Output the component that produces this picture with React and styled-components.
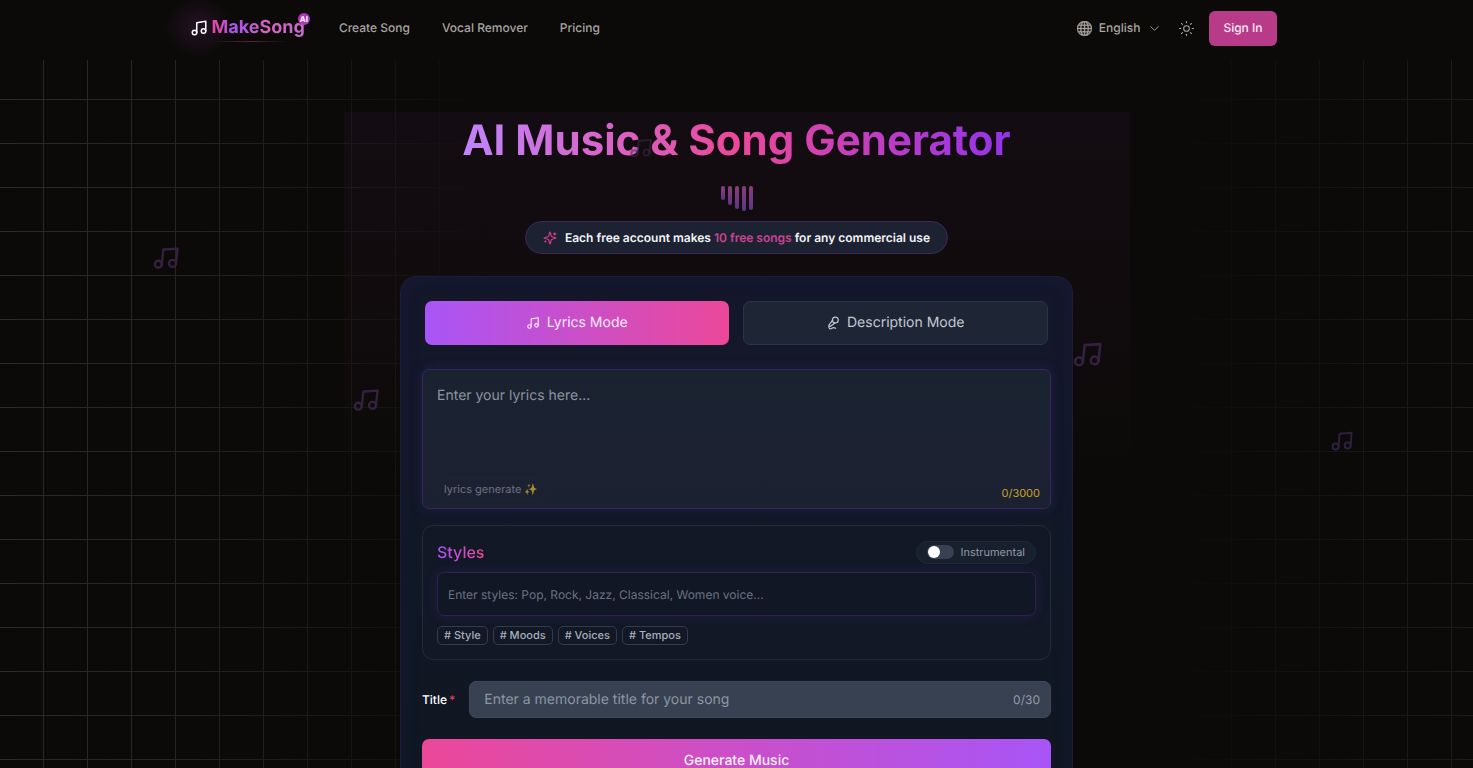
import React, { useState } from "react";
import styled, { createGlobalStyle } from "styled-components";
import { ChevronDown, MicVocal, Music, Sun } from "lucide-react";
import { BsGlobe } from "react-icons/bs";

const GlobalStyle = createGlobalStyle`
  *, *::before, *::after {
    box-sizing: border-box;
  }
  body {
    margin: 0;
    background: #0c0a09;
    color: #f3f4f6;
    font-family: Inter, "Liberation Sans", sans-serif;
    font-size: 12px;
    line-height: 20px;
    text-rendering: geometricPrecision;
  }
  button, input, textarea {
    font: inherit;
    color: inherit;
    text-rendering: inherit;
  }
`;

const Page = styled.div`
  position: relative;
  overflow: hidden;
`;

const GridBackdrop = styled.div`
  position: absolute;
  inset: 60px 0 0;
  background-image: linear-gradient(to right, #2b2a29 1px, transparent 1px),
    linear-gradient(to bottom, #2b2a29 1px, transparent 1px);
  background-size: 44px 44px;
  background-position: 43px 39px;
  mask-image: linear-gradient(
    to right,
    #000 0%,
    rgba(0, 0, 0, 0.85) 12%,
    rgba(0, 0, 0, 0.35) 25%,
    transparent 33%,
    transparent 79%,
    rgba(0, 0, 0, 0.6) 100%
  );
`;

const FloatingNote = styled(Music)`
  position: absolute;
  left: ${({ $left }) => $left};
  top: ${({ $top }) => $top}px;
  color: ${({ $color }) => $color || "#34213f"};
  transform: rotate(${({ $turn }) => $turn || 6}deg);
  pointer-events: none;
`;

const Header = styled.header`
  position: relative;
  height: 60px;
  background: #0c0a09;
`;

const HeaderInner = styled.div`
  max-width: 1092px;
  height: 56px;
  margin: 0 auto;
  padding-right: 6px;
  display: flex;
  align-items: center;
`;

const Logo = styled.a`
  position: relative;
  display: flex;
  align-items: center;
  gap: 4px;
  margin-left: -1px;
  color: #fff;
  text-decoration: none;
  &::before {
    content: "";
    position: absolute;
    left: -24px;
    top: -16px;
    width: 66px;
    height: 58px;
    background: radial-gradient(closest-side, rgba(168, 60, 190, 0.16), transparent);
  }
  &::after {
    content: "";
    position: absolute;
    left: 22px;
    bottom: 0;
    width: 76px;
    height: 1px;
    background: linear-gradient(to right, transparent, #5b2140, transparent);
  }
  svg {
    position: relative;
  }
`;

const LogoText = styled.span`
  font-size: 18px;
  line-height: 28px;
  font-weight: 700;
  background: linear-gradient(to right, #ec4899, #a855f7 25%, #d565b8 60%, #c26bd0);
  background-clip: text;
  color: transparent;
`;

const LogoBadge = styled.span`
  position: absolute;
  right: -5px;
  top: -1px;
  width: 12px;
  height: 12px;
  border-radius: 50%;
  background: linear-gradient(to right, #c034a5, #9b3bd0);
  color: #fff;
  font-size: 8px;
  font-weight: 700;
  line-height: 12px;
  text-align: center;
`;

const Nav = styled.nav`
  display: flex;
  gap: 32px;
  margin-left: 34px;
  a {
    color: #a8a5a2;
    text-decoration: none;
    font-weight: 500;
  }
`;

const HeaderActions = styled.div`
  display: flex;
  align-items: center;
  margin-left: auto;
`;

const LanguageButton = styled.button`
  display: flex;
  align-items: center;
  gap: 7px;
  padding: 0;
  border: 0;
  background: none;
  color: #a8a5a2;
  font-weight: 500;
`;

const ThemeButton = styled.button`
  display: flex;
  margin: 0 14px 0 16px;
  padding: 0;
  border: 0;
  background: none;
  color: #a8a5a2;
`;

const SignInButton = styled.button`
  height: 35px;
  padding: 0 14px;
  border: 0;
  border-radius: 6px;
  background: #b73b89;
  color: #fbeaf4;
  font-weight: 500;
`;

const Hero = styled.main`
  position: relative;
  display: flex;
  flex-direction: column;
  align-items: center;
  padding: 52px 20px 40px;
`;

const HeroGlow = styled.div`
  position: absolute;
  top: 52px;
  left: 50%;
  width: 786px;
  max-width: 100%;
  height: 370px;
  transform: translateX(-50%);
  background: linear-gradient(
    to bottom,
    rgba(110, 50, 150, 0.07),
    rgba(130, 40, 110, 0.04) 50%,
    transparent
  );
`;

const Title = styled.h1`
  position: relative;
  margin: 0;
  font-size: 42px;
  line-height: 58px;
  font-weight: 700;
  background: linear-gradient(to right, #c084fc, #ec4899 50%, #9333ea);
  background-clip: text;
  color: transparent;
`;

const Bars = styled.div`
  position: relative;
  display: flex;
  gap: 3px;
  height: 25px;
  margin: 16px 0 10px;
`;

const Bar = styled.span`
  width: 4px;
  height: ${({ $height }) => $height}px;
  border-radius: 2px;
  background: linear-gradient(to bottom, #893f78, #5d3585);
`;

const Notice = styled.p`
  position: relative;
  display: flex;
  align-items: center;
  gap: 8px;
  height: 33px;
  margin: 0 0 22px;
  padding: 0 17px;
  border: 1px solid #3b2a5a;
  border-radius: 17px;
  background: #1d2232;
  font-weight: 600;
  svg {
    color: #cb3f86;
  }
  strong {
    color: #cb4390;
    font-weight: 600;
  }
`;

const Card = styled.form`
  position: relative;
  width: 100%;
  max-width: 673px;
  padding: 24px 21px;
  border: 1px solid #1d1c38;
  border-radius: 16px;
  background: linear-gradient(to bottom, #14172a, #111826 50%, #101722);
  box-shadow: inset 0 0 20px rgba(45, 40, 130, 0.12);
`;

const ModeTabs = styled.div`
  display: flex;
  gap: 14px;
  margin: 0 3px 24px;
`;

const ModeButton = styled.button`
  flex: 1;
  display: flex;
  align-items: center;
  justify-content: center;
  gap: 7px;
  height: 44px;
  padding: 0;
  border: ${({ $active }) => ($active ? "0" : "1px solid #2a3443")};
  border-radius: 7px;
  background: ${({ $active }) =>
    $active ? "linear-gradient(to right, #a855f7, #ec4899)" : "#1e2535"};
  color: ${({ $active }) => ($active ? "#fbeaff" : "#c3c9d4")};
  font-size: 14px;
`;

const LyricsBox = styled.div`
  position: relative;
  height: 140px;
  margin-bottom: 16px;
  border: 1px solid #3a2460;
  border-radius: 7px;
  background: linear-gradient(to bottom, #1a2230, #1c2131);
  box-shadow: 0 0 14px rgba(110, 60, 220, 0.16);
`;

const LyricsInput = styled.textarea`
  display: block;
  width: 100%;
  height: 100%;
  padding: 14px;
  border: 0;
  outline: 0;
  resize: none;
  background: none;
  font-size: 14px;
  line-height: 23px;
  &::placeholder {
    color: #8d93a0;
    opacity: 1;
  }
`;

const GenerateLyrics = styled.button`
  position: absolute;
  left: 13px;
  bottom: 8px;
  height: 23px;
  padding: 0 11px 0 7px;
  border: 1px solid #1f2332;
  border-radius: 12px;
  background: none;
  color: #6b7180;
  font-size: 11px;
  span {
    opacity: 0.6;
  }
`;

const LyricsCount = styled.span`
  position: absolute;
  right: 10px;
  bottom: 5px;
  color: #caa62b;
  font-size: 11px;
`;

const StylesPanel = styled.section`
  margin-bottom: 21px;
  padding: 14px;
  border: 1px solid #222a39;
  border-radius: 11px;
  background: #121826;
`;

const StylesHead = styled.div`
  display: flex;
  align-items: center;
  justify-content: space-between;
  height: 24px;
  margin-bottom: 8px;
`;

const StylesTitle = styled.h2`
  margin: 0;
  font-size: 16px;
  line-height: 24px;
  font-weight: 500;
  background: linear-gradient(to right, #a855f7, #ec4899);
  background-clip: text;
  color: transparent;
`;

const SwitchLabel = styled.label`
  display: flex;
  align-items: center;
  gap: 6px;
  height: 23px;
  padding: 0 10px;
  border: 1px solid #1f2a38;
  border-radius: 12px;
  background: #18202e;
  color: #9299a6;
  font-size: 11px;
`;

const Switch = styled.input`
  appearance: none;
  display: flex;
  align-items: center;
  width: 27px;
  height: 14px;
  margin: 0;
  padding: 1px;
  border-radius: 7px;
  background: #374151;
  &::before {
    content: "";
    width: 12px;
    height: 12px;
    border-radius: 50%;
    background: #fff;
  }
  &:checked::before {
    margin-left: auto;
  }
`;

const StylesInput = styled.input`
  display: block;
  width: 100%;
  height: 44px;
  padding: 0 10px;
  border: 1px solid #2f2050;
  border-radius: 7px;
  outline: 0;
  background: #111725;
  box-shadow: 0 0 14px rgba(110, 60, 220, 0.16);
  &::placeholder {
    color: #6b7280;
    opacity: 1;
  }
`;

const TagRow = styled.div`
  display: flex;
  gap: 5px;
  margin-top: 10px;
`;

const Tag = styled.button`
  height: 19px;
  padding: 0 6px;
  border: 1px solid #343c4a;
  border-radius: 5px;
  background: none;
  color: #a9b0bc;
  font-size: 11px;
  line-height: 17px;
  font-weight: 500;
`;

const TitleRow = styled.div`
  display: flex;
  align-items: center;
  gap: 14px;
  margin-bottom: 21px;
  label {
    color: #fff;
    font-weight: 500;
  }
  label span {
    margin-left: 2px;
    color: #d6404c;
  }
`;

const TitleField = styled.div`
  flex: 1;
  display: flex;
  align-items: center;
  height: 37px;
  padding: 0 10px 0 14px;
  border: 1px solid #3e4a58;
  border-radius: 7px;
  background: #374151;
  color: #9299a6;
`;

const TitleInput = styled.input`
  flex: 1;
  min-width: 0;
  padding: 0;
  border: 0;
  outline: 0;
  background: none;
  font-size: 14px;
  &::placeholder {
    color: #8d95a2;
    opacity: 1;
  }
`;

const SubmitButton = styled.button`
  display: block;
  width: 100%;
  height: 44px;
  border: 0;
  border-radius: 7px;
  background: linear-gradient(to right, #ec4899, #a855f7);
  color: #fdeefa;
  font-size: 14px;
  font-weight: 500;
`;

const NOTES = [
  { size: 28, left: "10.3%", top: 244 },
  { size: 28, left: "23.9%", top: 386 },
  { size: 31, left: "72.8%", top: 339 },
  { size: 24, left: "90.3%", top: 429, color: "#2e1f3c", turn: 4 },
];

const BAR_HEIGHTS = [14, 19, 23, 25, 24];
const TAGS = ["# Style", "# Moods", "# Voices", "# Tempos"];

const SparklesIcon = () => (
  <svg
    width="14"
    height="14"
    viewBox="0 0 24 24"
    fill="none"
    stroke="currentColor"
    strokeWidth="2"
    strokeLinecap="round"
    strokeLinejoin="round"
    aria-hidden="true"
  >
    <path d="M9.937 15.5A2 2 0 0 0 8.5 14.063l-6.135-1.582a.5.5 0 0 1 0-.962L8.5 9.936A2 2 0 0 0 9.937 8.5l1.582-6.135a.5.5 0 0 1 .963 0L14.063 8.5A2 2 0 0 0 15.5 9.937l6.135 1.581a.5.5 0 0 1 0 .964L15.5 14.063a2 2 0 0 0-1.437 1.437l-1.582 6.135a.5.5 0 0 1-.963 0z" />
    <path d="M20 3v4M22 5h-4M4 17v2M5 18H3" />
  </svg>
);

const TopBar = () => (
  <Header>
    <HeaderInner>
      <Logo href="#">
        <Music size={18} strokeWidth={2} />
        <LogoText>MakeSong</LogoText>
        <LogoBadge>AI</LogoBadge>
      </Logo>
      <Nav>
        <a href="#create">Create Song</a>
        <a href="#remover">Vocal Remover</a>
        <a href="#pricing">Pricing</a>
      </Nav>
      <HeaderActions>
        <LanguageButton type="button">
          <BsGlobe size={15} strokeWidth={0.4} />
          English
          <ChevronDown size={15} strokeWidth={1.5} />
        </LanguageButton>
        <ThemeButton type="button" aria-label="Toggle theme">
          <Sun size={17} strokeWidth={1.5} />
        </ThemeButton>
        <SignInButton type="button">Sign In</SignInButton>
      </HeaderActions>
    </HeaderInner>
  </Header>
);

const SongForm = () => {
  const [mode, setMode] = useState("lyrics");
  const [lyrics, setLyrics] = useState("");
  const [styles, setStyles] = useState("");
  const [title, setTitle] = useState("");

  return (
    <Card onSubmit={(e) => e.preventDefault()}>
      <ModeTabs>
        <ModeButton
          type="button"
          $active={mode === "lyrics"}
          onClick={() => setMode("lyrics")}
        >
          <Music size={14} />
          Lyrics Mode
        </ModeButton>
        <ModeButton
          type="button"
          $active={mode === "description"}
          onClick={() => setMode("description")}
        >
          <MicVocal size={14} />
          Description Mode
        </ModeButton>
      </ModeTabs>
      <LyricsBox>
        <LyricsInput
          aria-label="Lyrics"
          placeholder="Enter your lyrics here..."
          maxLength={3000}
          value={lyrics}
          onChange={(e) => setLyrics(e.target.value)}
        />
        <GenerateLyrics type="button">
          lyrics generate <span>✨</span>
        </GenerateLyrics>
        <LyricsCount>{lyrics.length}/3000</LyricsCount>
      </LyricsBox>
      <StylesPanel>
        <StylesHead>
          <StylesTitle>Styles</StylesTitle>
          <SwitchLabel>
            <Switch type="checkbox" />
            Instrumental
          </SwitchLabel>
        </StylesHead>
        <StylesInput
          aria-label="Styles"
          placeholder="Enter styles: Pop, Rock, Jazz, Classical, Women voice..."
          value={styles}
          onChange={(e) => setStyles(e.target.value)}
        />
        <TagRow>
          {TAGS.map((tag) => (
            <Tag type="button" key={tag}>
              {tag}
            </Tag>
          ))}
        </TagRow>
      </StylesPanel>
      <TitleRow>
        <label htmlFor="song-title">
          Title<span>*</span>
        </label>
        <TitleField>
          <TitleInput
            id="song-title"
            placeholder="Enter a memorable title for your song"
            maxLength={30}
            value={title}
            onChange={(e) => setTitle(e.target.value)}
          />
          {title.length}/30
        </TitleField>
      </TitleRow>
      <SubmitButton type="submit">Generate Music</SubmitButton>
    </Card>
  );
};

function App() {
  return (
    <Page>
      <GlobalStyle />
      <GridBackdrop />
      <TopBar />
      <Hero>
        <HeroGlow />
        <Title>AI Music &amp; Song Generator</Title>
        <Bars>
          {BAR_HEIGHTS.map((height, i) => (
            <Bar key={i} $height={height} />
          ))}
        </Bars>
        <Notice>
          <SparklesIcon />
          <span>
            Each free account makes <strong>10 free songs</strong> for any
            commercial use
          </span>
        </Notice>
        <SongForm />
      </Hero>
      {NOTES.map((note) => (
        <FloatingNote
          key={note.left}
          size={note.size}
          $left={note.left}
          $top={note.top}
          $color={note.color}
          $turn={note.turn}
        />
      ))}
      <FloatingNote size={24} $left="42.7%" $top={136} $color="#3b2a4a88" />
    </Page>
  );
}

export default App;
